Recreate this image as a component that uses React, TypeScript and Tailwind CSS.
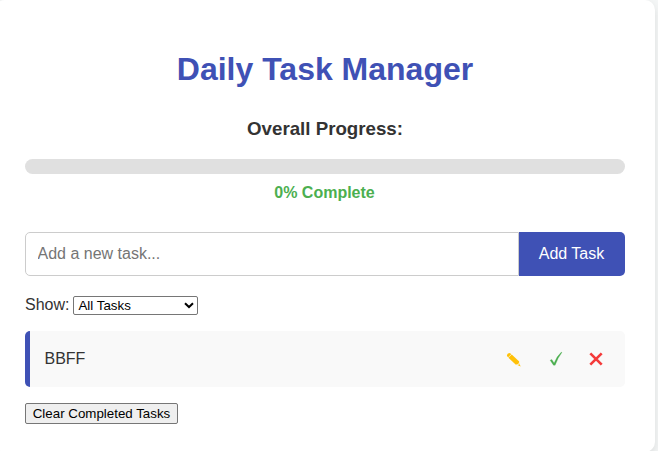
import { useState } from "react";

function PencilIcon() {
  return (
    <svg width="16" height="16" viewBox="0 0 16 16" aria-hidden="true">
      <path d="M0.9 4.1 Q1 1.2 4 1 L5.2 2.2 L2.2 5.2 Z" fill="#ffc107" />
      <path d="M2.4 5.7 L5.7 2.6 L13.2 9.5 L12.6 11.8 L9.9 12.7 Z" fill="#ffc107" />
      <path d="M10.2 12.7 L12.6 12 L13.2 10 L14.4 14.2 Z" fill="#ffe6a0" />
      <path d="M12.1 13.3 L13.5 12.2 L14.7 14.6 Z" fill="#ffc107" />
    </svg>
  );
}

function CheckIcon() {
  return (
    <svg width="14" height="16" viewBox="0 0 14 16" aria-hidden="true">
      <path d="M1.1 9.2 L2.8 8.4 L5.1 12.1 Q7.7 5.3 12.4 1.1 L12.9 1.5 Q8.9 6.5 6.1 14.2 L4.5 14.2 Z" fill="#4caf50" stroke="#4caf50" strokeWidth="0.25" />
    </svg>
  );
}

function CrossIcon() {
  return (
    <svg width="14" height="14" viewBox="0 0 14 14" aria-hidden="true">
      <path d="M1.3 1.3 L12.7 12.7 M12.7 1.3 L1.3 12.7" stroke="#f43a3a" strokeWidth="2.6" />
    </svg>
  );
}

export default function App() {
  const [task, setTask] = useState("");
  const [filter, setFilter] = useState("all");
  return (
    <div className="flex h-[451px] w-[658px] overflow-hidden bg-[#f4f6f6] font-['Liberation_Sans',Arial,sans-serif] text-base text-[#333]">
      <main className="-ml-[5px] h-[452px] w-[660px] shrink-0 rounded-[10px] bg-white px-[30px] pt-[51px] shadow-[0_4px_10px_rgba(0,0,0,0.1)]">
        <h1 className="h-[37px] text-center text-[32px] leading-[37px] font-bold text-[#3f51b5]">Daily Task Manager</h1>
        <h3 className="mt-[30px] h-[22px] text-center text-[18.72px] leading-[22px] font-bold">Overall Progress:</h3>
        <div className="mt-[19px] h-[15px] rounded-[10px] bg-[#e0e0e0]" />
        <p className="mt-[10px] h-[18px] pr-px text-center leading-[18px] font-bold text-[#4caf50]">0% Complete</p>
        <div className="mt-[30px] flex h-11">
          <input
            className="min-w-0 flex-1 rounded-l-[5px] border border-[#ccc] px-[11.5px] placeholder:text-[#757575] outline-none"
            placeholder="Add a new task..."
            value={task}
            onChange={(e) => setTask(e.target.value)}
          />
          <button className="w-[106px] rounded-r-[5px] bg-[#3f51b5] pr-px text-white">Add Task</button>
        </div>
        <div className="mt-[19px] flex h-5 items-center">
          <label htmlFor="filter" className="mr-1 leading-5">Show:</label>
          <div className="relative h-[19px] w-[125px]">
            <select
              id="filter"
              className="block h-full w-full appearance-none rounded-[2px] border border-[#767676] bg-white pl-1 text-[13.333px] leading-[15px] text-black"
              value={filter}
              onChange={(e) => setFilter(e.target.value)}
            >
              <option value="all">All Tasks</option>
              <option value="done">Completed</option>
            </select>
            <svg className="pointer-events-none absolute top-[6px] right-1" width="10" height="7" viewBox="0 0 10 7">
              <path d="M1 1.2 L5 5 L9 1.2" fill="none" stroke="#000" strokeWidth="2" />
            </svg>
          </div>
        </div>
        <ul className="mt-4">
          <li className="flex h-14 items-center rounded-[5px] border-l-5 border-[#3f51b5] bg-[#f9f9f9] pr-[22px] pl-[14.5px]">
            <span className="flex-1">BBFF</span>
            <button className="mr-[27px] pt-px" aria-label="Edit"><PencilIcon /></button>
            <button className="mr-[26px]" aria-label="Complete"><CheckIcon /></button>
            <button aria-label="Delete"><CrossIcon /></button>
          </li>
        </ul>
        <button className="mt-4 block h-[21px] w-[153px] rounded-[2px] border border-[#767676] bg-[#efefef] text-[13.333px] leading-[19px] whitespace-nowrap text-black">
          Clear Completed Tasks
        </button>
      </main>
    </div>
  );
}
